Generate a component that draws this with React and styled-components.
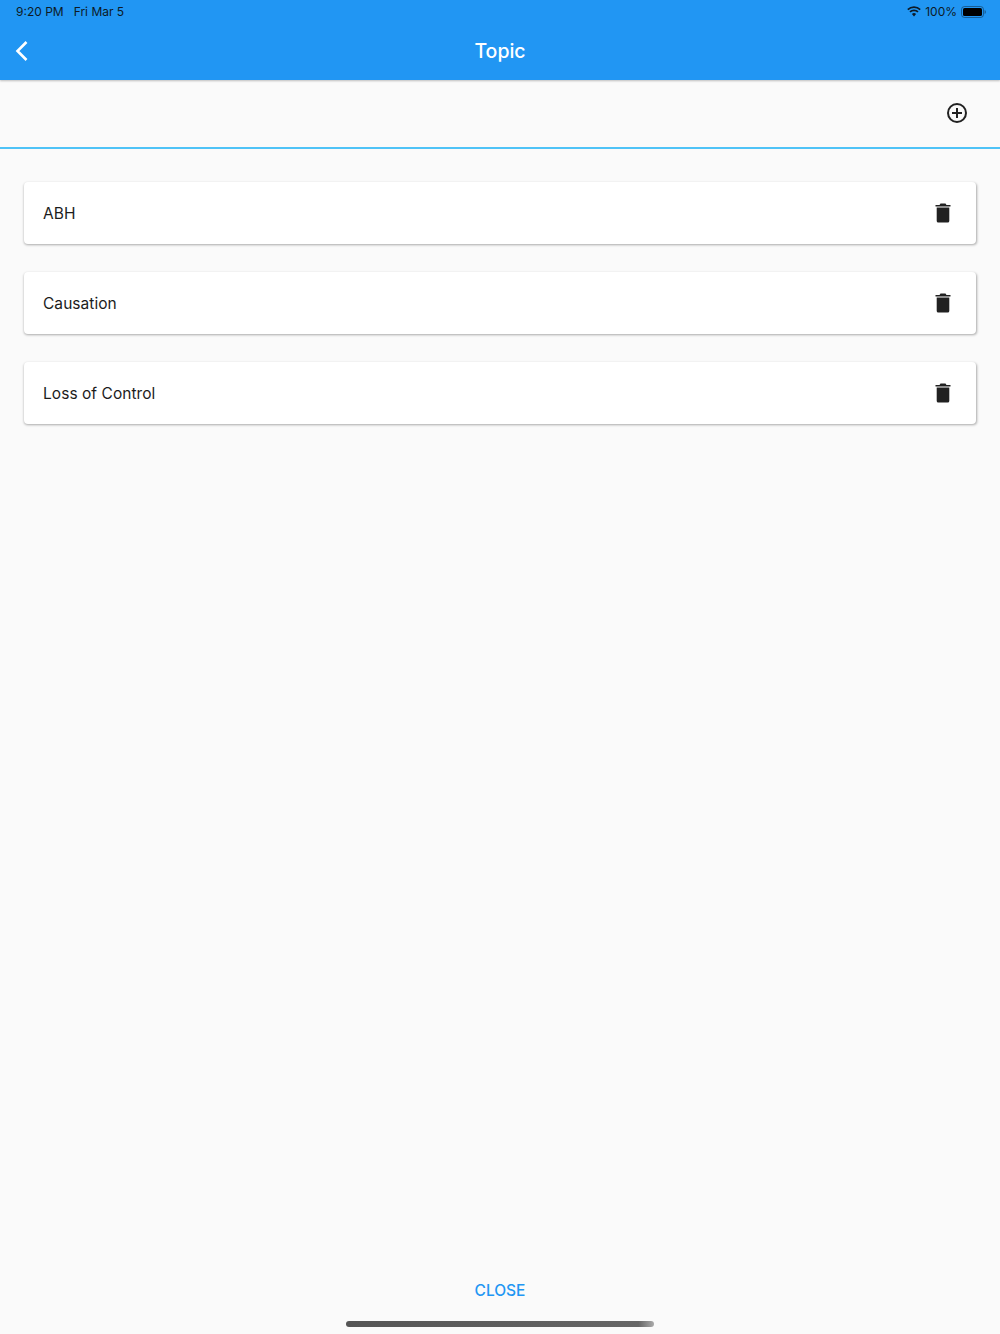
import React from 'react';
import styled, { createGlobalStyle } from 'styled-components';

const Global = createGlobalStyle`
  html, body { margin: 0; padding: 0; background: #fafafa; }
  body { font-family: "Roboto", "Inter", "Liberation Sans", sans-serif; }
  * { box-sizing: border-box; }
`;

const Page = styled.div`
  width: 1000px;
  height: 1334px;
  display: flex;
  flex-direction: column;
  background: #fafafa;
  overflow: hidden;
`;

const Header = styled.header`
  height: 80px;
  flex: none;
  background: #2196f3;
  display: flex;
  flex-direction: column;
  box-shadow: 0 1px 2px rgba(0,0,0,.25);
  position: relative;
`;

const StatusBar = styled.div`
  height: 23px;
  flex: none;
  padding: 0 14px 0 16px;
  display: flex;
  align-items: center;
  justify-content: space-between;
  font-family: "Inter", "Liberation Sans", sans-serif;
  font-size: 12px;
  color: #0d1a26;
`;

const StatusGroup = styled.div`
  display: flex;
  align-items: center;
  gap: ${p => p.$gap}px;
`;

const NavBar = styled.div`
  flex: 1;
  display: grid;
  grid-template-columns: 1fr auto 1fr;
  align-items: center;
  padding-bottom: 1px;
`;

const BackButton = styled.div`
  display: flex;
  padding-left: 15px;
`;

const Title = styled.h1`
  margin: 0;
  font-family: "Inter", "Liberation Sans", sans-serif;
  font-size: 19.5px;
  font-weight: 500;
  color: #fff;
`;

const Toolbar = styled.div`
  height: 69px;
  flex: none;
  border-bottom: 2px solid #4fc3f7;
  display: flex;
  align-items: center;
  justify-content: flex-end;
  padding: 0 33px 1px 0;
`;

const List = styled.div`
  flex: 1;
  display: flex;
  flex-direction: column;
  gap: 28px;
  padding: 33px 24px 0;
`;

const Card = styled.div`
  height: 62px;
  background: #fff;
  border-radius: 4px;
  box-shadow: .5px 1px 2.5px rgba(0,0,0,.32);
  display: flex;
  align-items: center;
  justify-content: space-between;
  padding: 0 25px 0 19px;
`;

const Label = styled.span`
  font-family: "Inter", "Roboto", sans-serif;
  font-size: 15.5px;
  letter-spacing: .05px;
  color: #1c1c1c;
`;

const Footer = styled.div`
  height: 70px;
  flex: none;
  display: flex;
  flex-direction: column;
  align-items: center;
`;

const CloseButton = styled.button`
  border: 0;
  background: none;
  padding: 0;
  height: 20px;
  margin-top: 16px;
  font-family: "Inter", "Liberation Sans", sans-serif;
  font-size: 15.5px;
  font-weight: 500;
  color: #2196f3;
`;

const HomeBar = styled.div`
  width: 308px;
  height: 6px;
  margin-top: 21px;
  border-radius: 3px;
  background: linear-gradient(90deg, #555 0%, #666 95%, #aaa 100%);
`;

const Trash = () => (
  <svg width="16" height="20" viewBox="0 0 16 20">
    <path fill="#212121" d="M5.5 0.5h5l1 1.500H15.500v1.500H.5V2h4zM1.700 4.500h12.600v13.500a1.600 1.600 0 0 1-1.600 1.600H3.300A1.600 1.600 0 0 1 1.700 18z" />
  </svg>
);

const items = ['ABH', 'Causation', 'Loss of Control'];

export default function App() {
  return (
    <Page>
      <Global />
      <Header>
        <StatusBar>
          <StatusGroup $gap={10}><span>9:20 PM</span><span>Fri Mar 5</span></StatusGroup>
          <StatusGroup $gap={4}>
            <svg width="14" height="11" viewBox="0 0 14 11">
              <path fill="none" stroke="#0d1a26" strokeWidth="1.7" d="M.8 3.600a9 9 0 0 1 12.400 0M3 5.900a5.800 5.800 0 0 1 8 0" />
              <path fill="#0d1a26" d="M7 10.400 4.900 8a3 3 0 0 1 4.200 0z" />
            </svg>
            <span>100%</span>
            <svg width="25" height="12" viewBox="0 0 25 12">
              <rect x=".5" y=".5" width="22" height="11" rx="3" fill="none" stroke="#0d1a26" strokeOpacity=".45" />
              <rect x="2" y="2" width="19" height="8" rx="1.600" fill="#000" />
              <path d="M23.600 4v4c.8-.3 1.200-1.100 1.200-2s-.4-1.700-1.200-2z" fill="#0d1a26" fillOpacity=".5" />
            </svg>
          </StatusGroup>
        </StatusBar>
        <NavBar>
          <BackButton>
            <svg width="14" height="24" viewBox="0 0 14 24">
              <path d="M11.500 3 2.500 12l9 9" fill="none" stroke="#fff" strokeWidth="2.600" />
            </svg>
          </BackButton>
          <Title>Topic</Title>
        </NavBar>
      </Header>
      <Toolbar>
        <svg width="20" height="20" viewBox="0 0 20 20">
          <circle cx="10" cy="10" r="9" fill="none" stroke="#212121" strokeWidth="2" />
          <path d="M10 5v10M5 10h10" stroke="#212121" strokeWidth="2" />
        </svg>
      </Toolbar>
      <List>
        {items.map(t => (
          <Card key={t}><Label>{t}</Label><Trash /></Card>
        ))}
      </List>
      <Footer>
        <CloseButton>CLOSE</CloseButton>
        <HomeBar />
      </Footer>
    </Page>
  );
}
